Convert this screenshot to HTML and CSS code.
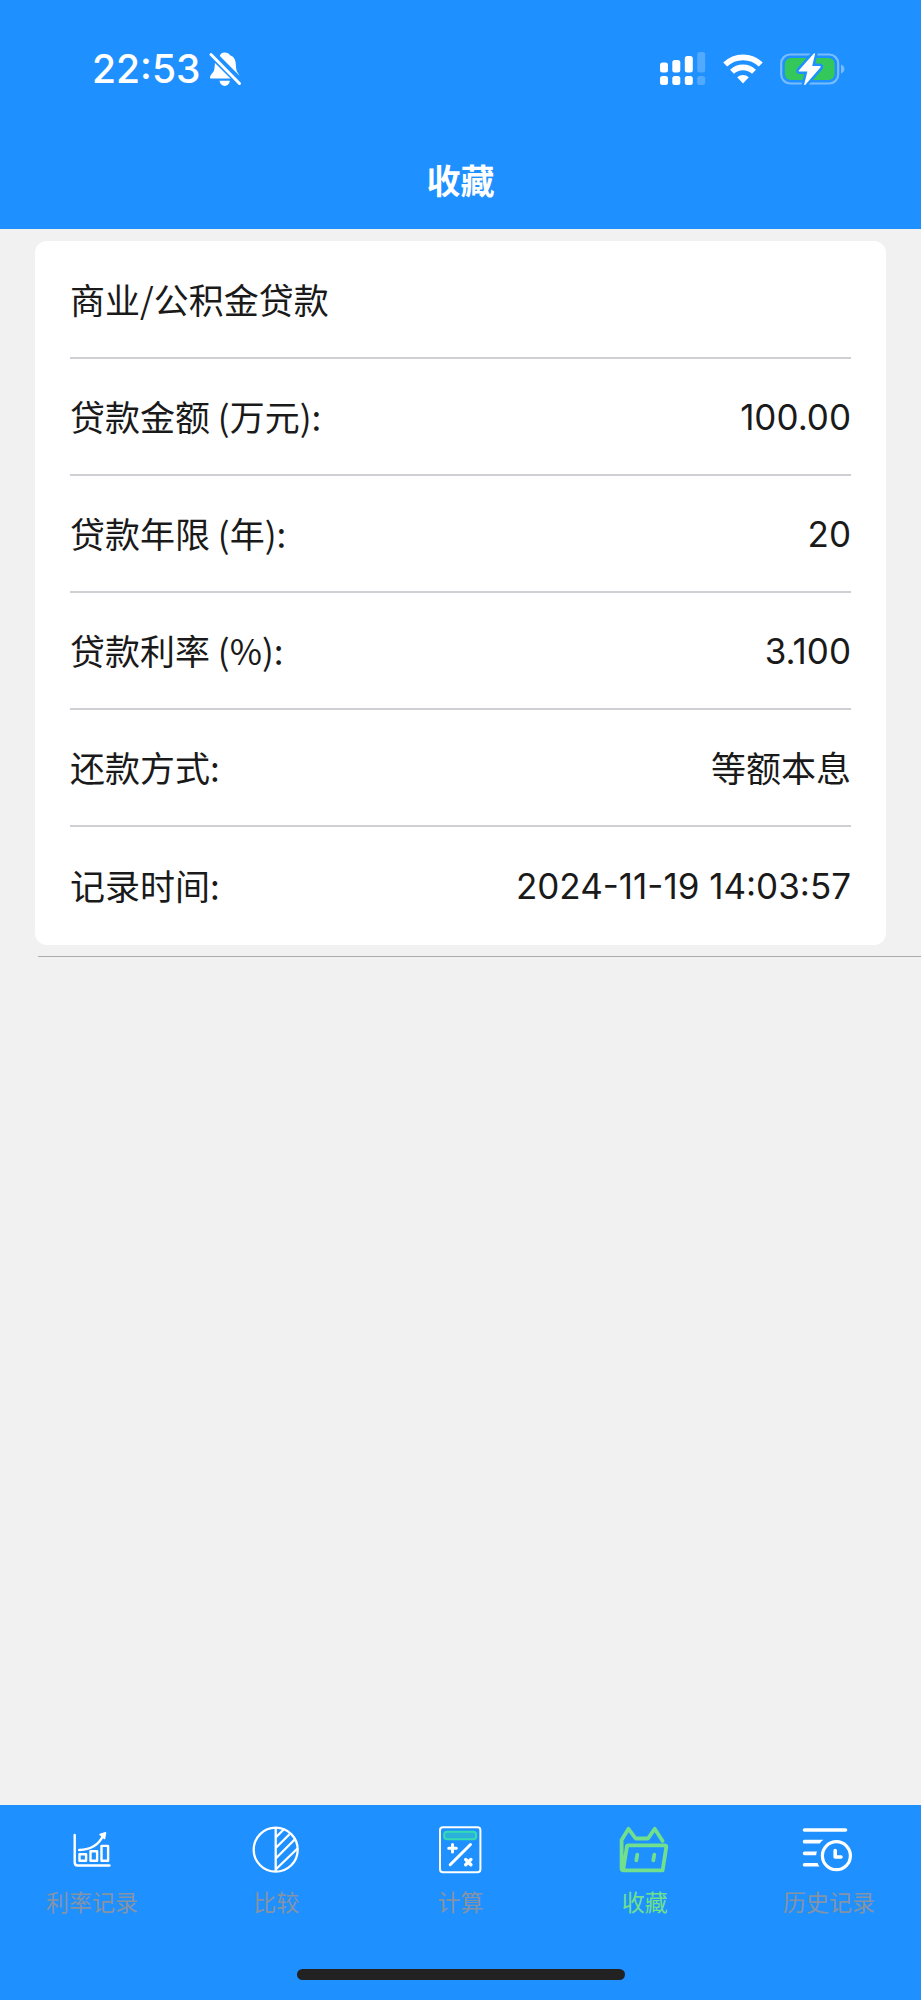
FILE: index.html
```html
<!DOCTYPE html>
<html lang="zh-CN">
<head>
<meta charset="utf-8">
<meta name="viewport" content="width=device-width, initial-scale=1">
<title>收藏</title>
<link rel="stylesheet" href="styles.css">
</head>
<body>
<header class="header">
  <div class="status">
    <div class="status-left">
      <span class="time">22:53</span>
      <svg width="34" height="36" viewBox="0 0 34 36" aria-hidden="true">
        <path fill="#fff" d="M16.500 1.500c-2.800 0-4.200 1.800-4.700 3.600L31.500 24.800c-.3-1.500-2.700-3.200-3.200-6.300-.6-5 .2-12.200-6.300-14.200-.6-1.700-2.700-2.800-5.500-2.800zM7.500 9.500C6.500 12.500 7 17.500 5.800 20c-1.300 2.600-3.800 4-3.800 6.400 0 .7.500 1 1.200 1h22z"/>
        <path fill="#fff" d="M11.500 29.800h10.400c-.5 3.200-2.600 5.200-5.200 5.200s-4.700-2-5.200-5.200z"/>
        <path stroke="#1e90ff" stroke-width="7" d="M2 2 34 34"/>
        <path stroke="#fff" stroke-width="3" stroke-linecap="round" d="M3 3.500 31.500 32.500"/>
      </svg>
    </div>
    <div class="status-right">
      <svg width="46" height="34" viewBox="0 0 46 34" aria-hidden="true">
        <g fill="#fff">
          <rect x="0" y="10.500" width="8" height="10" rx="2.500"/><rect x="12.300" y="8" width="8" height="12.500" rx="2.500"/><rect x="24.800" y="4" width="8" height="16.500" rx="2.500"/>
          <rect x="0" y="24" width="8" height="9" rx="2.500"/><rect x="12.300" y="24" width="8" height="9" rx="2.500"/><rect x="24.800" y="24" width="8" height="9" rx="2.500"/>
        </g>
        <g fill="#fff" opacity=".23"><rect x="37.200" y="0" width="8" height="20.500" rx="2.500"/><rect x="37.200" y="24" width="8" height="9" rx="2.500"/></g>
      </svg>
      <svg width="40" height="31" viewBox="0 0 40 31" aria-hidden="true">
        <g fill="none" stroke="#fff" stroke-width="5.600">
          <path d="M2.200 10.600a25.500 25.500 0 0 1 35.600 0"/>
          <path d="M9 17.800a15.800 15.800 0 0 1 22 0"/>
        </g>
        <path fill="#fff" d="M14.200 23.200a8.600 8.600 0 0 1 11.600 0L20 29.600z"/>
      </svg>
      <svg width="65" height="32" viewBox="0 0 65 32" aria-hidden="true">
        <rect x="1.200" y="1.500" width="57" height="29" rx="9" fill="none" stroke="#fff" stroke-opacity=".4" stroke-width="2.200"/>
        <path fill="#fff" fill-opacity=".4" d="M61 11.500c2 .8 3.400 2.400 3.400 4.500S63 19.700 61 20.500z"/>
        <rect x="4.800" y="5" width="49.800" height="22" rx="6" fill="#34c759"/>
        <path fill="#fff" stroke="#1e90ff" stroke-width="5" stroke-linejoin="round" paint-order="stroke" d="M33.800.5 19 17.200c-.6.700-.3 1.400.6 1.400h7.800L24.200 31.200c-.2.700.6 1.100 1.200.5l15-17.200c.6-.7.300-1.400-.6-1.400h-7.600L35 1.200c.2-.8-.6-1.400-1.200-.7z"/>
      </svg>
    </div>
  </div>
  <h1 class="title">收藏</h1>
</header>

<main class="content">
  <article class="card">
    <h2 class="row card-title">商业/公积金贷款</h2>
    <dl class="rows">
      <div class="row"><dt>贷款金额 (万元):</dt><dd class="number">100.00</dd></div>
      <div class="row"><dt>贷款年限 (年):</dt><dd class="number">20</dd></div>
      <div class="row"><dt>贷款利率 (%):</dt><dd class="number">3.100</dd></div>
      <div class="row"><dt>还款方式:</dt><dd>等额本息</dd></div>
      <div class="row"><dt>记录时间:</dt><dd class="number">2024-11-19 14:03:57</dd></div>
    </dl>
  </article>
  <hr class="divider">
</main>

<footer class="footer">
  <nav class="tabs">
    <button class="tab" type="button">
      <svg class="icon" viewBox="0 0 60 60" aria-hidden="true">
        <g fill="none" stroke="#fff" stroke-width="2.400" stroke-linecap="round" stroke-linejoin="round">
          <path d="M12.700 15v27.500q0 3 3 3H47.500"/>
          <rect x="17.500" y="34.300" width="6.600" height="6.500"/><rect x="28.500" y="31.200" width="6.600" height="9.600"/><rect x="39.500" y="25.900" width="6.600" height="14.900"/>
          <path d="M17.200 30q17.500-.5 24-14.500"/>
        </g>
        <path fill="#fff" stroke="#fff" stroke-width="1.500" stroke-linejoin="round" d="M38 14.500 43.500 12.800 42.500 18.500z"/>
      </svg>
      <span>利率记录</span>
    </button>
    <button class="tab" type="button">
      <svg class="icon" viewBox="0 0 60 60" aria-hidden="true">
        <g fill="none" stroke="#fff" stroke-width="2.300">
          <circle cx="29.700" cy="29.700" r="22"/>
          <path d="M29.700 7.700v44M29.700 17.500l8-8M29.700 28l13.800-13.800M29.700 38.500l19-19M29.700 49.500l21.800-21"/>
        </g>
      </svg>
      <span>比较</span>
    </button>
    <button class="tab" type="button">
      <svg class="icon" viewBox="0 0 60 60" aria-hidden="true">
        <rect x="10" y="7.300" width="40.400" height="45" rx="3" fill="none" stroke="#fff" stroke-width="2"/>
        <rect x="14.200" y="11.700" width="32" height="7.600" rx="3" fill="#2bb0dc" stroke="#35dcb0" stroke-width="2"/>
        <g fill="none" stroke="#fff" stroke-width="3" stroke-linecap="round">
          <path d="M18.700 28.300h7.600M22.500 24.500v7.600M20.200 44.700 40.500 24.500"/>
          <path stroke-width="3.400" d="M35.700 39.500l5.200 5.200M40.900 39.500l-5.200 5.200"/>
        </g>
      </svg>
      <span>计算</span>
    </button>
    <button class="tab active" type="button" aria-current="page">
      <svg class="icon" viewBox="0 0 60 60" aria-hidden="true">
        <g fill="none" stroke="currentColor" stroke-width="3.800" stroke-linecap="round" stroke-linejoin="round">
          <path d="M47.600 21 39.700 8.800 33 18.500H20.600L13.500 8.800 6.600 20v28.500q0 1.900 2 1.900H47.600L51.300 27q.2-1.700-1.500-1.700H13.500q-1.500 0-1.600 1.500L8.200 50"/>
          <path d="M22.300 34.700l-1 5.600M39.300 34.700l-1 5.600"/>
        </g>
      </svg>
      <span>收藏</span>
    </button>
    <button class="tab" type="button">
      <svg class="icon" viewBox="0 0 60 60" aria-hidden="true">
        <g fill="none" stroke="#fff" stroke-width="3.600" stroke-linecap="round" stroke-linejoin="round">
          <path d="M5.500 10H46.500"/>
          <circle cx="37.400" cy="35.700" r="14" stroke-width="3.200"/>
          <path d="M36.200 30.500v6.500h5.800"/>
        </g>
        <path fill="#fff" d="M5.600 19.800H24.500q-2.500 1.500-3.800 3.700H5.600a1.850 1.850 0 0 1 0-3.700zM5.600 31.500H18q-.8 1.600-.8 3.700H5.600a1.850 1.850 0 0 1 0-3.700zM5.600 42.900H18.600q.5 1.800 1.800 3.700H5.600a1.850 1.850 0 0 1 0-3.700z"/>
      </svg>
      <span>历史记录</span>
    </button>
  </nav>
  <div class="home-indicator"></div>
</footer>
</body>
</html>
```
FILE: styles.css
```css
* {
  box-sizing: border-box;
}

body {
  display: flex;
  flex-direction: column;
  min-height: 100vh;
  margin: 0;
  background: #f1f1f1;
  color: #1a1a1a;
  font-family: "Noto Sans CJK SC", sans-serif;
}

.header {
  background: #1e90ff;
  color: #fff;
}

.status {
  display: flex;
  align-items: center;
  justify-content: space-between;
  height: 138px;
  padding: 0 76px 0 92px;
}

.status-left {
  display: flex;
  align-items: center;
  gap: 8px;
}

.status-right {
  display: flex;
  align-items: center;
  gap: 17px;
}

.time {
  font-family: Inter, sans-serif;
  font-size: 39px;
  font-weight: 500;
  line-height: 48px;
}

.title {
  margin: 0;
  padding: 17px 0 24px;
  font-size: 34px;
  font-weight: 700;
  line-height: 50px;
  text-align: center;
}

.content {
  flex: 1;
  padding-top: 12px;
}

.card {
  margin: 0 35px;
  padding: 1px 35px;
  border-radius: 12px;
  background: #fff;
}

.rows {
  margin: 0;
}

.row {
  display: flex;
  align-items: center;
  justify-content: space-between;
  min-height: 117px;
  padding-bottom: 2px;
  border-bottom: 2px solid #cfcfd4;
  font-size: 35px;
  line-height: 50px;
}

.rows .row:last-child {
  border-bottom: 0;
}

.card-title {
  margin: 0;
  font-weight: 400;
}

.row dd {
  margin: 0;
}

.row .number {
  padding-top: 2px;
  font-family: Inter, sans-serif;
}

.divider {
  height: 1px;
  margin: 11px 0 0 38px;
  border: 0;
  background: #acacac;
}

.footer {
  padding-bottom: 20px;
  background: #1e90ff;
}

.tabs {
  display: grid;
  grid-template-columns: repeat(5, 1fr);
  height: 164px;
}

.tab {
  display: flex;
  flex-direction: column;
  align-items: center;
  gap: 4px;
  padding: 15px 0 0;
  border: 0;
  background: none;
  color: #8494a6;
  font-family: "Noto Sans CJK SC", sans-serif;
  font-size: 23px;
  line-height: 34px;
}

.tab.active {
  color: #70e08c;
}

.icon {
  width: 60px;
  height: 60px;
}

.home-indicator {
  width: 328px;
  height: 11px;
  margin: 0 auto;
  border-radius: 6px;
  background: #222;
}
```
